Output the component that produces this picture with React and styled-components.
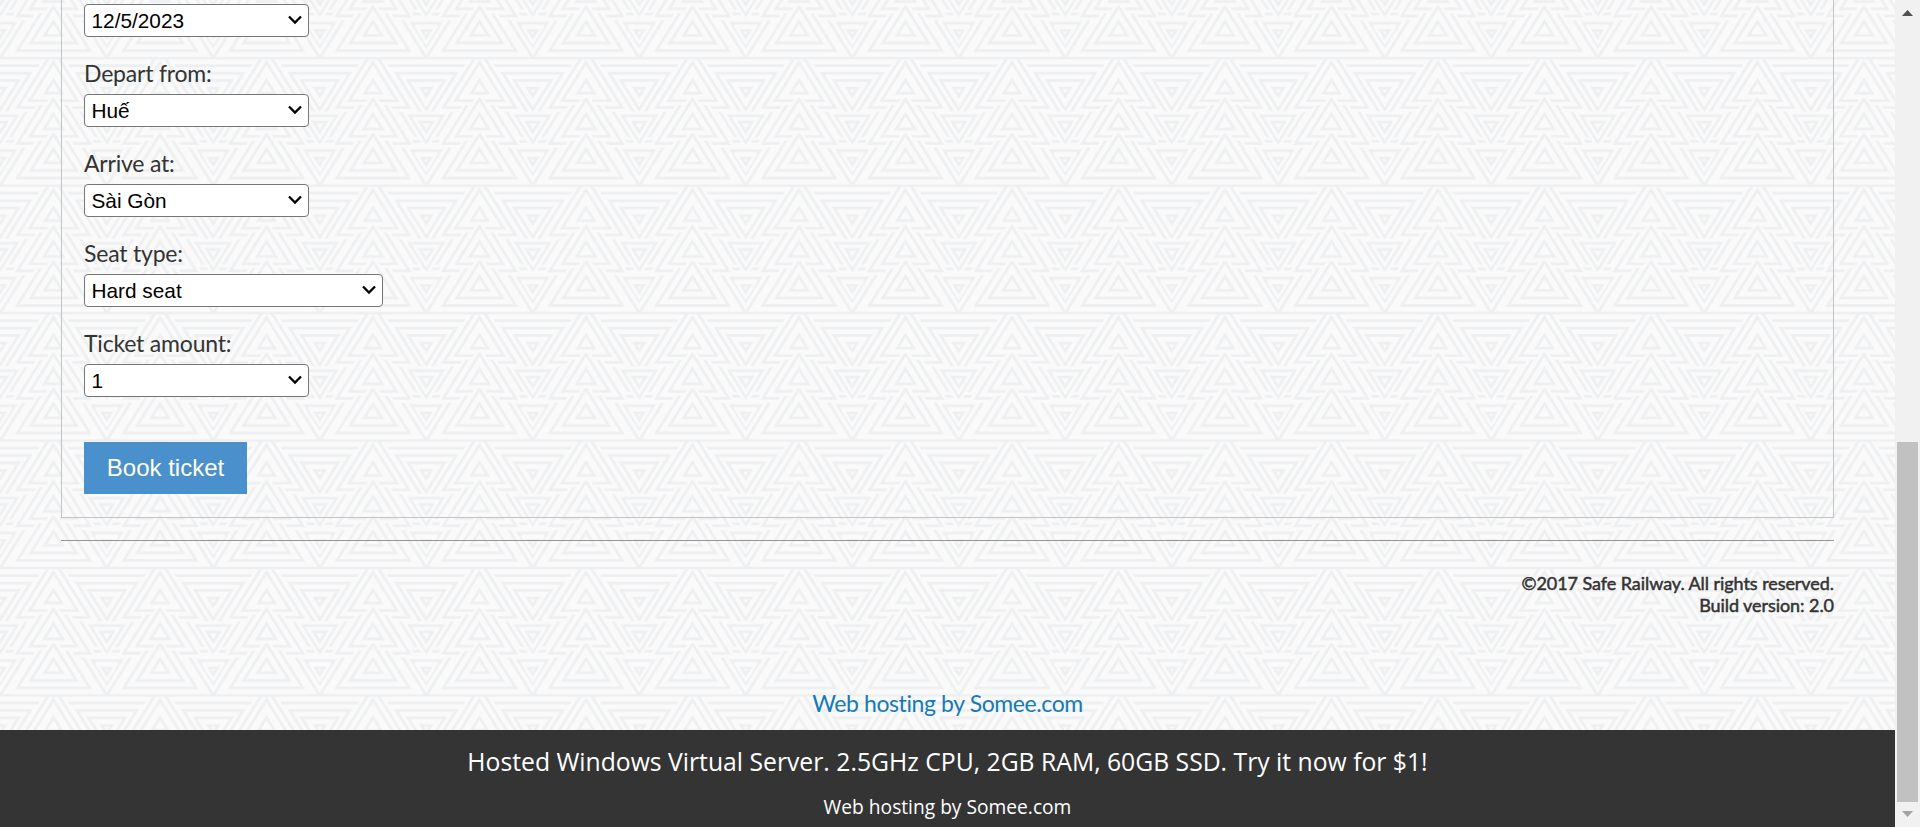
import React from "react";
import styled, { createGlobalStyle } from "styled-components";

const PAPER = "#fafafa";
const LINE = "#eeeff1";
const SLOPE = 1.6;

const GlobalStyle = createGlobalStyle`
  html, body { margin: 0; height: 100%; overflow: hidden; background: ${PAPER}; }
  #root { height: 100%; }
  *, *::before, *::after { box-sizing: border-box; }
`;

const Screen = styled.div`
  position: relative;
  display: flex;
  width: 100%;
  height: 827px;
  overflow: hidden;
  color: #333;
  font-family: Lato, "Liberation Sans", sans-serif;
  font-size: 23px;
  letter-spacing: -0.2px;
  font-variant-ligatures: none;
`;

const Wallpaper = styled.svg`
  position: absolute;
  inset: 0;
  width: 100%;
  height: 100%;
`;

const Page = styled.div`
  position: relative;
  flex: 1;
  display: flex;
  flex-direction: column;
  min-width: 0;
`;

const Main = styled.main`
  height: 730px;
  padding: 0 61px;
  display: flex;
  flex-direction: column;
`;

const BookingForm = styled.form`
  height: 518px;
  padding: 4px 22px 0;
  border: 1px solid #c3c4c5;
  border-top: 0;
`;

const Field = styled.div`
  height: 90px;
`;

const Label = styled.label`
  display: block;
  height: 57px;
  padding-top: 21px;
  line-height: 30px;
  white-space: nowrap;
`;

const SelectBox = styled.div`
  position: relative;
  width: ${(p) => p.$width || 225}px;
  height: 33px;

  svg {
    position: absolute;
    right: 7px;
    top: 11px;
  }
`;

const Select = styled.select`
  appearance: none;
  display: block;
  width: 100%;
  height: 33px;
  margin: 0;
  padding: 0 30px 0 6.5px;
  border: 1px solid #767676;
  border-radius: 4px;
  background: #fff;
  color: #000;
  font: 20.8px/31px "Liberation Sans", sans-serif;
`;

const BookButton = styled.button`
  display: block;
  width: 163px;
  height: 52px;
  margin-top: 45px;
  padding: 0;
  border: 0;
  background: #4a90cd;
  color: #ffffe8;
  font: 24px "Liberation Sans", sans-serif;
`;

const Rule = styled.hr`
  width: 100%;
  height: 1px;
  margin: 22px 0 0;
  border: 0;
  background: #969696;
`;

const Copyright = styled.p`
  margin: 31px 0 0;
  text-align: right;
  font-size: 18px;
  line-height: 22px;
  letter-spacing: -0.06px;
  -webkit-text-stroke: 0.5px #333;
`;

const HostLink = styled.a`
  margin-top: 72px;
  align-self: center;
  line-height: 30px;
  letter-spacing: -0.4px;
  color: #157ab5;
  text-decoration: none;
`;

const HostBar = styled.footer`
  height: 97px;
  padding-top: 13px;
  display: flex;
  flex-direction: column;
  align-items: center;
  background: rgba(50, 50, 50, 0.99);
  color: #fff;
  font-family: "Open Sans", "Noto Sans", sans-serif;
  letter-spacing: 0;
`;

const HostOffer = styled.div`
  font-size: 24.72px;
  line-height: 38px;
  white-space: nowrap;
`;

const HostNote = styled.div`
  margin-top: 12px;
  font-size: 19.2px;
  line-height: 28px;
`;

const ScrollTrack = styled.div`
  position: relative;
  width: 25px;
  display: flex;
  flex-direction: column;
  align-items: center;
  background: #f1f1f1;
`;

const ScrollThumb = styled.div`
  width: 21px;
  height: 360px;
  margin: 426px 0 9px;
  background: #c1c1c1;
`;

const ScrollArrow = styled.svg`
  display: block;
  flex: none;
  margin-top: ${(p) => p.$top || 0}px;
`;

function Triangle({ cx, tip, base }) {
  const h = Math.abs(base - tip) / SLOPE;
  const points = `${cx},${tip} ${cx + h},${base} ${cx - h},${base}`;
  return (
    <>
      <polygon points={points} fill={PAPER} stroke={PAPER} strokeWidth="26" />
      <polygon points={points} fill={PAPER} stroke={LINE} strokeWidth="8" />
    </>
  );
}

const DOWN = [
  [23, 226], [150, 286], [250, 383],
  [45, 189], [67, 155], [90, 114],
  [173, 253], [192, 222],
  [278, 347], [300, 320],
];

const UP = [
  [-25, 148], [82, 256], [186, 360],
  [13, 128], [123, 235], [228, 338],
  [66, 105], [168, 213], [273, 315],
];

function Backdrop() {
  return (
    <Wallpaper aria-hidden="true">
      <defs>
        <pattern
          id="triangles"
          width="320"
          height="383"
          patternUnits="userSpaceOnUse"
          patternTransform="translate(0.3 -69.3) scale(0.3328)"
        >
          <rect width="320" height="383" fill={PAPER} />
          {[0, 320].map((cx) =>
            DOWN.map(([base, tip]) => <Triangle key={`${cx}-${base}`} cx={cx} tip={tip} base={base} />)
          )}
          {UP.map(([tip, base]) => (
            <Triangle key={tip} cx={160} tip={tip} base={base} />
          ))}
          <path d="M0 0H320M0 383H320" stroke={LINE} strokeWidth="7" />
        </pattern>
      </defs>
      <rect width="100%" height="100%" fill="url(#triangles)" />
    </Wallpaper>
  );
}

function Dropdown({ id, value, width }) {
  return (
    <SelectBox $width={width}>
      <Select id={id} defaultValue={value}>
        <option>{value}</option>
      </Select>
      <svg width="14" height="10" viewBox="0 0 14 10" fill="none" stroke="#000" strokeWidth="2.3">
        <path d="M1 1.5L7 7.5L13 1.5" />
      </svg>
    </SelectBox>
  );
}

const FIELDS = [
  { id: "from", label: "Depart from:", value: "Huế" },
  { id: "to", label: "Arrive at:", value: "Sài Gòn" },
  { id: "seat", label: "Seat type:", value: "Hard seat", width: 299 },
  { id: "amount", label: "Ticket amount:", value: "1" },
];

export default function App() {
  return (
    <>
      <GlobalStyle />
      <Screen>
        <Backdrop />
        <Page>
          <Main>
            <BookingForm onSubmit={(e) => e.preventDefault()}>
              <Dropdown id="date" value="12/5/2023" />
              {FIELDS.map((f) => (
                <Field key={f.id}>
                  <Label htmlFor={f.id}>{f.label}</Label>
                  <Dropdown id={f.id} value={f.value} width={f.width} />
                </Field>
              ))}
              <BookButton>Book ticket</BookButton>
            </BookingForm>
            <Rule />
            <Copyright>
              ©2017 Safe Railway. All rights reserved.
              <br />
              Build version: 2.0
            </Copyright>
            <HostLink href="#">Web hosting by Somee.com</HostLink>
          </Main>
          <HostBar>
            <HostOffer>Hosted Windows Virtual Server. 2.5GHz CPU, 2GB RAM, 60GB SSD. Try it now for $1!</HostOffer>
            <HostNote>Web hosting by Somee.com</HostNote>
          </HostBar>
        </Page>
        <ScrollTrack>
          <ScrollArrow $top={10} width="11" height="6">
            <path d="M0 6L5.5 0L11 6Z" fill="#505050" />
          </ScrollArrow>
          <ScrollThumb />
          <ScrollArrow width="11" height="6">
            <path d="M0 0L5.5 6L11 0Z" fill="#a3a3a3" />
          </ScrollArrow>
        </ScrollTrack>
      </Screen>
    </>
  );
}
